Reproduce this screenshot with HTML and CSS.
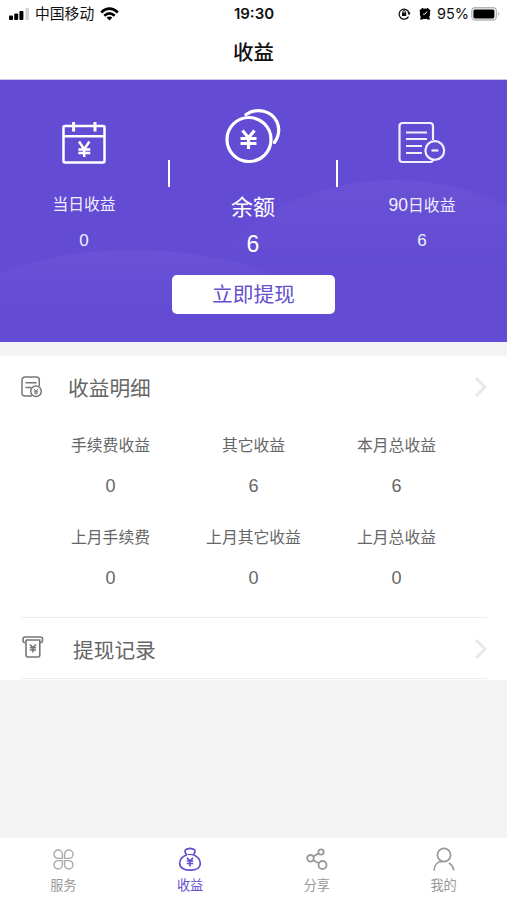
FILE: index.html
```html
<!DOCTYPE html>
<html lang="zh-CN">
  <head>
    <meta charset="UTF-8" />
    <meta name="viewport" content="width=device-width, initial-scale=1.0" />
    <title>收益</title>
    <link rel="stylesheet" href="styles.css">
  </head>
  <body>
    <div class="status-bar">
      <div class="status-left">
        <svg class="signal" width="20" height="14" viewBox="0 0 20 14">
          <rect x="0" y="8.5" width="4" height="4.500" rx="1" />
          <rect x="5.2" y="6.500" width="4" height="6.500" rx="1" />
          <rect x="10.4" y="4" width="4" height="9" rx="1" />
          <rect class="signal-off" x="16.4" y="1" width="3.6" height="12" rx="1" />
        </svg>
        <span class="carrier">中国移动</span>
        <svg class="wifi" width="19" height="14" viewBox="0 0 19 14" fill="none" stroke="#000" stroke-width="2.7">
          <path d="M1.2 5.4Q9.5-2 17.8 5.4" />
          <path d="M4.3 8.7Q9.5 4 14.7 8.7" />
          <path d="M6.6 10.6Q9.5 8.2 12.4 10.6L9.5 13.6Z" fill="#000" stroke="none" />
        </svg>
      </div>
      <div class="time">19:30</div>
      <div class="status-right">
        <svg class="lock" width="13" height="13" viewBox="0 0 13 13" fill="none" stroke="#111">
          <path d="M10.5 9.6A5 5 0 1 1 11 6" stroke-width="1.3" />
          <path d="M9.4 5.6H12.6L11.1 8.4Z" fill="#111" stroke="none" />
          <rect x="4" y="5.6" width="4.2" height="3.4" fill="#111" stroke="none" />
          <path d="M4.9 6V4.7a1.2 1.2 0 0 1 2.4 0V6" />
        </svg>
        <svg class="alarm" width="12" height="13" viewBox="0 0 12 13">
          <circle cx="6" cy="6.8" r="5.2" />
          <path d="M.3 3.8 3.4.7 5 2 1.5 5.500ZM11.7 3.8 8.6.7 7 2l3.5 3.500ZM1 12.4l1-3.500 2.800 2-1 1.500ZM11 12.4 10 8.900l-2.800 2 1 1.500Z" />
          <path d="M8 4.5 6 7.2H4" fill="none" stroke="#fff" stroke-width=".9" />
        </svg>
        <span class="percent">95%</span>
        <svg class="battery" width="30" height="14" viewBox="0 0 30 14">
          <rect x=".8" y=".8" width="24.6" height="12.2" rx="3.5" fill="#fff" stroke="#b5b5b5" stroke-width="1.4" />
          <rect x="2.4" y="2.4" width="21" height="9" rx="1.6" />
          <path d="M27.2 4.8q2.2 2.1 0 4.2z" fill="#b5b5b5" />
        </svg>
      </div>
    </div>
    <h1>收益</h1>

    <div class="hero">
      <svg class="waves" width="507" height="262" viewBox="0 0 507 262">
        <defs>
          <linearGradient id="wave" x1="0" y1="0" x2="0" y2="1">
            <stop offset="0" stop-color="#fff" stop-opacity=".04" />
            <stop offset=".3" stop-color="#fff" stop-opacity="0" />
          </linearGradient>
        </defs>
        <ellipse cx="395" cy="250" rx="200" ry="150" fill="url(#wave)" />
        <ellipse cx="133" cy="280" rx="220" ry="110" fill="url(#wave)" />
      </svg>
      <div class="summary">
        <div class="summary-item">
          <svg class="summary-icon" width="46" height="44" viewBox="0 0 46 44" fill="none" stroke="#fff" stroke-width="2.5">
            <rect x="2.5" y="5" width="41" height="36.5" rx="1.5" />
            <path d="M2.5 15.2H43.5" />
            <path d="M12.6 1v9.5M34 1v9.5" stroke-width="3" />
            <path d="M18 20.5l5.2 7.8 5.2-7.8M17.3 28.4h12M23.2 28v8M17.3 32h12" />
          </svg>
          <div class="label">当日收益</div>
          <div class="value">0</div>
        </div>
        <div class="summary-item balance">
          <svg class="summary-icon" width="58" height="56" viewBox="0 0 58 56" fill="none" stroke="#fff" stroke-width="3.2">
            <circle cx="25" cy="31.5" r="22" />
            <path d="M22 6.5C33-1 48 3 53 14c3 7 2 14-2.5 20.5" stroke-linecap="round" />
            <path d="M18.5 22.5l6 7.2 6-7.2M16.5 30.5h16M16.5 35.5h16M24.5 30v11" />
          </svg>
          <div class="label">余额</div>
          <div class="value">6</div>
        </div>
        <div class="summary-item">
          <svg class="summary-icon report" width="48" height="44" viewBox="0 0 48 44" fill="none" stroke="#f1efff" stroke-width="2.2">
            <path d="M35 19V5a3 3 0 0 0-3-3H4.500a3 3 0 0 0-3 3v33a3 3 0 0 0 3 3h27.500q2.500 0 3-2" />
            <path d="M8 11.5h21M8 18h21M8 25h16M8 32h16" />
            <circle cx="36.8" cy="29.5" r="9.4" />
            <path d="M33.500 29.5h6.800" />
          </svg>
          <div class="label label-mixed"><span>90</span>日收益</div>
          <div class="value">6</div>
        </div>
      </div>
      <button class="withdraw">立即提现</button>
    </div>

    <div class="card">
      <div class="row row-detail">
        <svg class="row-icon" width="22" height="22" viewBox="0 0 22 22" fill="none" stroke="#777" stroke-width="1.5">
          <path d="M18.3 10V4a3 3 0 0 0-3-3H4a3 3 0 0 0-3 3v13a3 3 0 0 0 3 3h7" />
          <path d="M4.5 6.7h11M4.5 11.5h6" />
          <circle cx="15" cy="15.3" r="5.3" />
          <path d="M13 12.9l2 2.3 2-2.3M12.8 15.2h4.4M13 17h4M15 15v3.6" stroke-width="1" />
        </svg>
        <span class="row-title">收益明细</span>
        <svg class="arrow" width="13" height="20" viewBox="0 0 13 20"><path d="M2 1 11 10l-9 9" /></svg>
      </div>
      <div class="details">
        <div class="detail"><div class="detail-label">手续费收益</div><div class="detail-value">0</div></div>
        <div class="detail"><div class="detail-label">其它收益</div><div class="detail-value">6</div></div>
        <div class="detail"><div class="detail-label">本月总收益</div><div class="detail-value">6</div></div>
        <div class="detail"><div class="detail-label">上月手续费</div><div class="detail-value">0</div></div>
        <div class="detail"><div class="detail-label">上月其它收益</div><div class="detail-value">0</div></div>
        <div class="detail"><div class="detail-label">上月总收益</div><div class="detail-value">0</div></div>
      </div>
      <div class="row row-records">
        <svg class="row-icon" width="22" height="22" viewBox="0 0 22 22" fill="none" stroke="#777" stroke-width="1.6">
          <path d="M3.5 6.5H2.5Q1 6.5 1 4.5V3q0-2 2-2h15.5q2 0 2 2v1.5q0 2-1.5 2H18" />
          <path d="M4 4h13.800v15q0 2-2 2H6q-2 0-2-2V4" />
          <path d="M8 8.500l2.900 3.300 2.900-3.300M7.800 11.800h6.200M7.800 14h6.200M10.900 11.500v5" />
        </svg>
        <span class="row-title">提现记录</span>
        <svg class="arrow" width="13" height="20" viewBox="0 0 13 20"><path d="M2 1 11 10l-9 9" /></svg>
      </div>
    </div>

    <div class="tab-bar">
      <div class="tab">
        <svg width="24" height="24" viewBox="0 0 24 24" fill="none" stroke="#aaa" stroke-width="1.4">
          <path d="M11.400 11.400H7.200A4.200 4.200 0 1 1 11.400 7.200ZM13.600 11.400V7.200A4.200 4.200 0 1 1 17.800 11.400ZM11.400 13.600V17.800A4.200 4.200 0 1 1 7.200 13.600ZM13.600 13.600H17.800A4.200 4.200 0 1 1 13.600 17.800Z" />
        </svg>
        <span>服务</span>
      </div>
      <div class="tab active">
        <svg width="24" height="24" viewBox="0 0 24 24" fill="none" stroke="#6550cf" stroke-width="1.7">
          <path d="M8.800 7.800C6.800 5.500 6.300 3.500 8 2.500c1.200-.8 2.200-.5 4-1.300 1.800.8 2.800.5 4 1.300 1.700 1 1.200 3-.8 5.300C19.500 9.500 22.300 13 22.300 16.500c0 4.500-4.800 6.700-10.300 6.700S1.700 21 1.700 16.500C1.700 13 4.500 9.500 8.800 7.800" />
          <path d="M9.500 7.500h5" stroke-width="1.200" />
          <path d="M9 10.800l3 3.200 3-3.200M8.800 14h6.400M8.800 16.500h6.400M12 13.500v6" />
        </svg>
        <span>收益</span>
      </div>
      <div class="tab">
        <svg width="24" height="24" viewBox="0 0 24 24" fill="none" stroke="#999" stroke-width="1.8">
          <circle cx="5.500" cy="11.300" r="3.300" />
          <circle cx="16" cy="5" r="2.700" />
          <circle cx="17.500" cy="18" r="4" />
          <path d="M8.300 9.500l5.300-3.100M8.200 13.300l5.800 2.900" />
        </svg>
        <span>分享</span>
      </div>
      <div class="tab">
        <svg width="24" height="24" viewBox="0 0 24 24" fill="none" stroke="#999" stroke-width="1.7">
          <circle cx="12" cy="8" r="6.600" />
          <path d="M2 23.500C2.300 17.500 6 14.500 10.500 14.500M17 16c2.500 1.700 4.500 4.300 4.800 7.500" />
        </svg>
        <span>我的</span>
      </div>
    </div>
  </body>
</html>
```

FILE: styles.css
```css
* {
  box-sizing: border-box;
}

body {
  margin: 0;
  height: 900px;
  display: flex;
  flex-direction: column;
  background: #f4f4f4;
  color: #666;
  font-family: "Liberation Sans", "Noto Sans CJK SC", sans-serif;
  overflow: hidden;
}

svg {
  display: block;
  flex: none;
}

.status-bar {
  display: grid;
  grid-template-columns: 1fr auto 1fr;
  align-items: center;
  height: 28px;
  padding: 0 6px 0 9px;
  background: #fff;
  color: #111;
  font-family: Inter, "Noto Sans CJK SC", sans-serif;
  font-size: 14.5px;
  line-height: 28px;
}

.status-left,
.status-right {
  display: flex;
  align-items: center;
}

.status-right {
  justify-content: flex-end;
}

.signal-off {
  fill: #d5d5d5;
}

.carrier {
  margin: 0 6px;
  font-size: 14.8px;
}

.time {
  padding-right: 2px;
  font-size: 15px;
  font-weight: 600;
}

.lock {
  margin-top: -1px;
}

.alarm {
  margin: -1px 6px 0 8px;
}

.percent {
  margin-right: 2px;
}

.battery {
  margin-top: -1px;
}

h1 {
  margin: 0;
  height: 52px;
  background: #fff;
  border-bottom: 1px solid #ccc6ed;
  color: #111;
  font-size: 20.5px;
  font-weight: 500;
  line-height: 50px;
  text-align: center;
}

.hero {
  position: relative;
  height: 262px;
  background: #634bd4;
  color: #f1efff;
}

.waves {
  position: absolute;
  top: 0;
  left: 0;
}

.summary {
  position: relative;
  display: grid;
  grid-template-columns: 168px 170px 168px;
  height: 195px;
}

.summary-item {
  display: flex;
  flex-direction: column;
  align-items: center;
  padding-top: 41px;
  font-size: 15.8px;
}

.label {
  margin-top: 28px;
  height: 24px;
  line-height: 24px;
}

.label-mixed span {
  font-size: 17.5px;
}

.value {
  margin-top: 12px;
  font-size: 17px;
  line-height: 24px;
}

.balance {
  padding-top: 28px;
  background:
    linear-gradient(#fff, #fff) 0 80px / 2px 27px no-repeat,
    linear-gradient(#fff, #fff) 100% 80px / 2px 27px no-repeat;
  color: #fff;
  font-size: 22px;
}

.balance .label {
  margin-top: 29px;
  height: 30px;
  line-height: 30px;
}

.balance .value {
  margin-top: 6px;
  font-size: 23px;
  line-height: 30px;
}

.withdraw {
  position: relative;
  display: block;
  width: 163px;
  height: 39px;
  margin: 0 auto;
  padding: 0;
  border: none;
  border-radius: 5px;
  background: #fff;
  color: #6550cf;
  font-family: inherit;
  font-size: 20.7px;
  line-height: 39px;
}

.card {
  height: 324px;
  margin-top: 14px;
  padding: 0 20px 0 21px;
  background: #fff;
}

.row {
  display: flex;
  align-items: center;
  height: 62px;
}

.row-detail .row-icon {
  margin-top: -1px;
}

.row-title {
  flex: 1;
  margin-left: 25px;
  font-size: 20.7px;
}

.row-records {
  border-top: 1px solid #eee;
  border-bottom: 1px solid #eee;
  padding-top: 2px;
}

.row-records .row-icon {
  margin: -5px 0 0 1px;
}

.row-records .row-title {
  margin-left: 29px;
}

.arrow {
  fill: none;
  stroke: #e8e8e8;
  stroke-width: 3;
}

.details {
  display: grid;
  grid-template-columns: repeat(3, 1fr);
  grid-auto-rows: 92px;
  height: 199px;
  margin: 0 19px 0 18px;
  padding-top: 16px;
  text-align: center;
}

.detail-label {
  font-size: 15.8px;
  line-height: 24px;
}

.detail-value {
  margin-top: 16px;
  font-size: 18px;
  line-height: 24px;
}

.tab-bar {
  display: grid;
  grid-template-columns: repeat(4, 1fr);
  height: 62px;
  margin-top: auto;
  background: #fff;
}

.tab {
  display: flex;
  flex-direction: column;
  align-items: center;
  padding-top: 9px;
  color: #999;
  font-size: 13.2px;
  line-height: 20px;
}

.tab span {
  margin-top: 5px;
}

.tab.active {
  color: #6550cf;
}
```
